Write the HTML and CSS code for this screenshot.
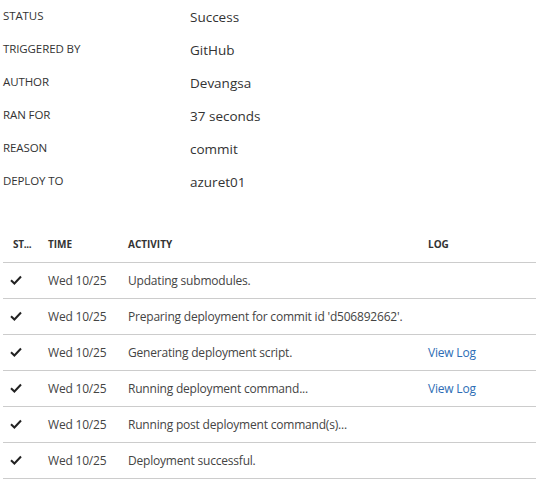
FILE: index.html
```html
<!DOCTYPE html>
<html>
<head>
<meta charset="utf-8">
<link rel="stylesheet" href="styles.css">
</head>
<body>
<div class="page">
  <div class="details">
    <div class="row"><div class="label">STATUS</div><div class="value">Success</div></div>
    <div class="row"><div class="label">TRIGGERED BY</div><div class="value">GitHub</div></div>
    <div class="row"><div class="label">AUTHOR</div><div class="value">Devangsa</div></div>
    <div class="row"><div class="label">RAN FOR</div><div class="value">37 seconds</div></div>
    <div class="row"><div class="label">REASON</div><div class="value">commit</div></div>
    <div class="row"><div class="label">DEPLOY TO</div><div class="value">azuret01</div></div>
  </div>
  <table class="log">
    <colgroup><col class="c1"><col class="c2"><col class="c3"><col class="c4"></colgroup>
    <thead>
      <tr><th class="st" title="STATUS">ST...</th><th>TIME</th><th>ACTIVITY</th><th>LOG</th></tr>
    </thead>
    <tbody>
      <tr><td><svg class="check" width="12" height="10" viewBox="0 0 12 10"><path d="M1 5.2 L4.4 8.5 L11 1.5" fill="none" stroke="#222" stroke-width="2"/></svg></td><td class="time">Wed 10/25</td><td>Updating submodules.</td><td></td></tr>
      <tr><td><svg class="check" width="12" height="10" viewBox="0 0 12 10"><path d="M1 5.2 L4.4 8.5 L11 1.5" fill="none" stroke="#222" stroke-width="2"/></svg></td><td class="time">Wed 10/25</td><td>Preparing deployment for commit id 'd506892662'.</td><td></td></tr>
      <tr><td><svg class="check" width="12" height="10" viewBox="0 0 12 10"><path d="M1 5.2 L4.4 8.5 L11 1.5" fill="none" stroke="#222" stroke-width="2"/></svg></td><td class="time">Wed 10/25</td><td>Generating deployment script.</td><td><a class="link" href="#">View Log</a></td></tr>
      <tr><td><svg class="check" width="12" height="10" viewBox="0 0 12 10"><path d="M1 5.2 L4.4 8.5 L11 1.5" fill="none" stroke="#222" stroke-width="2"/></svg></td><td class="time">Wed 10/25</td><td>Running deployment command...</td><td><a class="link" href="#">View Log</a></td></tr>
      <tr><td><svg class="check" width="12" height="10" viewBox="0 0 12 10"><path d="M1 5.2 L4.4 8.5 L11 1.5" fill="none" stroke="#222" stroke-width="2"/></svg></td><td class="time">Wed 10/25</td><td>Running post deployment command(s)...</td><td></td></tr>
      <tr><td><svg class="check" width="12" height="10" viewBox="0 0 12 10"><path d="M1 5.2 L4.4 8.5 L11 1.5" fill="none" stroke="#222" stroke-width="2"/></svg></td><td class="time">Wed 10/25</td><td>Deployment successful.</td><td></td></tr>
    </tbody>
  </table>
</div>
</body>
</html>
```
FILE: styles.css
```css
html, body { margin: 0; padding: 0; background: #fff; }
body { font-family: "Open Sans", "Noto Sans", sans-serif; color: #333; }
.page { padding: 7px 1px 0 3px; }
.details { display: flex; flex-direction: column; }
.row { display: flex; height: 33px; }
.label { width: 187px; font-size: 11.5px; line-height: 16px; margin-top: 1px; color: #333; letter-spacing: -0.1px; }
.value { font-size: 13.5px; line-height: 20px; color: #333; }
.log { margin-top: 21px; width: 533px; border-collapse: collapse; table-layout: fixed; }
.c1 { width: 35px; }
.c2 { width: 80px; }
.c3 { width: 300px; }
th { font-size: 10px; font-weight: 700; text-align: left; height: 36px; padding: 0 0 0 10px; vertical-align: middle; border-bottom: 1px solid #ccc; color: #333; white-space: nowrap; box-sizing: border-box; }
th.st { padding-right: 0; letter-spacing: -0.3px; }
td { font-size: 12px; letter-spacing: -0.2px; height: 35px; padding: 0 0 0 10px; vertical-align: middle; border-bottom: 1px solid #ccc; color: #444; white-space: nowrap; }
td:first-child { padding-left: 7px; }
.check { display: block; }
.link { color: #2d6db5; text-decoration: none; }
```
